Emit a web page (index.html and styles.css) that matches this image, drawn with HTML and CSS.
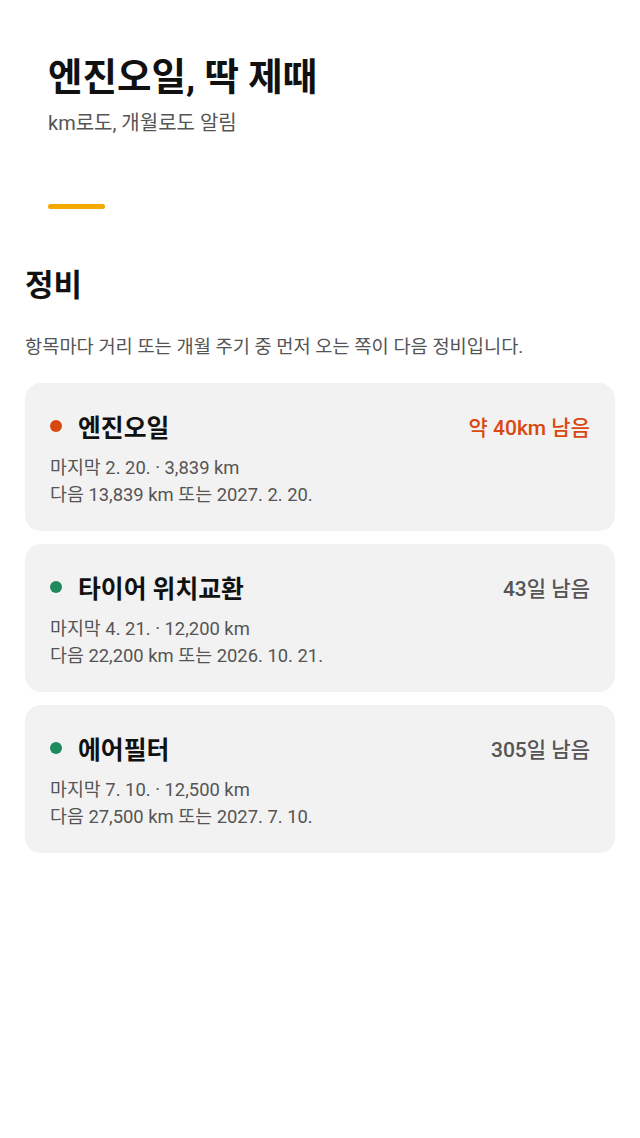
FILE: index.html
```html
<!DOCTYPE html>
<html lang="ko">
<head>
<meta charset="utf-8">
<title>엔진오일, 딱 제때</title>
<link rel="stylesheet" href="styles.css">
</head>
<body>
<header class="hero">
  <h1 class="hero-title">엔진오일, 딱 제때</h1>
  <p class="hero-sub">km로도, 개월로도 알림</p>
  <div class="hero-bar"></div>
</header>
<main class="section">
  <h2 class="section-title">정비</h2>
  <p class="section-desc">항목마다 거리 또는 개월 주기 중 먼저 오는 쪽이 다음 정비입니다.</p>
  <div class="cards">
    <div class="card">
      <div class="card-head">
        <span class="dot dot-warn"></span>
        <span class="card-name">엔진오일</span>
        <span class="card-left warn">약 40km 남음</span>
      </div>
      <div class="card-detail">
        <div>마지막 2. 20. · 3,839 km</div>
        <div>다음 13,839 km 또는 2027. 2. 20.</div>
      </div>
    </div>
    <div class="card">
      <div class="card-head">
        <span class="dot dot-ok"></span>
        <span class="card-name">타이어 위치교환</span>
        <span class="card-left">43일 남음</span>
      </div>
      <div class="card-detail">
        <div>마지막 4. 21. · 12,200 km</div>
        <div>다음 22,200 km 또는 2026. 10. 21.</div>
      </div>
    </div>
    <div class="card">
      <div class="card-head">
        <span class="dot dot-ok"></span>
        <span class="card-name">에어필터</span>
        <span class="card-left">305일 남음</span>
      </div>
      <div class="card-detail">
        <div>마지막 7. 10. · 12,500 km</div>
        <div>다음 27,500 km 또는 2027. 7. 10.</div>
      </div>
    </div>
  </div>
</main>
</body>
</html>
```

FILE: styles.css
```css
* { box-sizing: border-box; }
html, body { margin: 0; padding: 0; background: #ffffff; }
body {
  font-family: Roboto, "Noto Sans CJK KR", sans-serif;
  color: #111111;
}
.hero {
  padding: 54px 48px 0 48px;
}
.hero-title {
  margin: 0;
  font-size: 37.5px;
  line-height: 47px;
  font-weight: 700;
  color: #111111;
}
.hero-sub {
  margin: 9px 0 0 0;
  font-size: 20px;
  line-height: 27px;
  color: #555555;
}
.hero-bar {
  margin-top: 67px;
  width: 57px;
  height: 5px;
  border-radius: 3px;
  background: #f2a900;
}
.section {
  padding: 0 25px;
}
.section-title {
  margin: 58px 0 0 0;
  font-size: 31px;
  line-height: 38px;
  font-weight: 700;
  color: #111111;
}
.section-desc {
  margin: 29px 0 0 0;
  font-size: 18.7px;
  line-height: 26px;
  color: #555555;
}
.cards {
  margin-top: 23px;
  display: flex;
  flex-direction: column;
  gap: 13px;
}
.card {
  background: #f2f2f2;
  border-radius: 16px;
  padding: 26px 25px 23px 25px;
  height: 148px;
}
.card-head {
  display: flex;
  align-items: center;
  height: 34px;
}
.dot {
  width: 12px;
  height: 12px;
  border-radius: 50%;
  flex: none;
  margin-right: 16px;
}
.dot-warn { background: #d9480f; }
.dot-ok { background: #1f8a5b; }
.card-name {
  font-size: 24.8px;
  font-weight: 700;
  color: #111111;
  flex: 1;
}
.card-left {
  font-size: 21px;
  font-weight: 500;
  color: #555555;
}
.card-left.warn { color: #d9480f; }
.card-detail {
  margin-top: 11px;
  font-size: 18.4px;
  line-height: 27px;
  color: #555555;
}
```
